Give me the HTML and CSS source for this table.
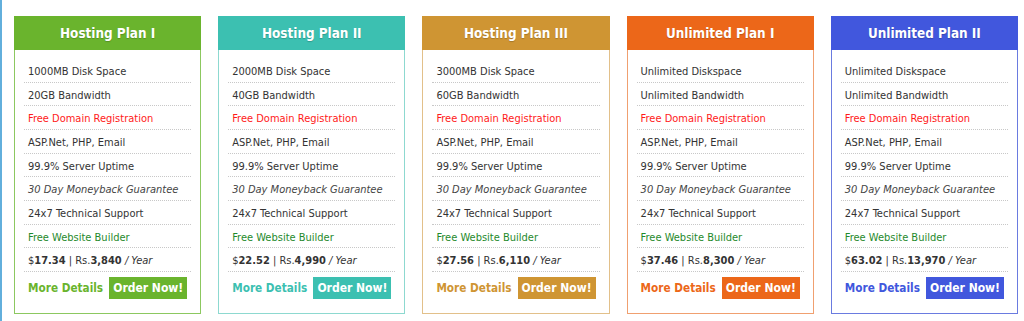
FILE: index.html
```html
<!DOCTYPE html>
<html>
<head>
<meta charset="utf-8">
<link rel="stylesheet" href="styles.css">
</head>
<body>
<div class="page">
  <div class="plan plan-1">
    <h2 class="plan-title">Hosting Plan I</h2>
    <ul class="features">
      <li>1000MB Disk Space</li>
      <li>20GB Bandwidth</li>
      <li class="red">Free Domain Registration</li>
      <li>ASP.Net, PHP, Email</li>
      <li>99.9% Server Uptime</li>
      <li class="em">30 Day Moneyback Guarantee</li>
      <li>24x7 Technical Support</li>
      <li class="green">Free Website Builder</li>
      <li>$<b>17.34</b> | Rs.<b>3,840</b> <i>/ Year</i></li>
    </ul>
    <div class="actions"><a class="more">More Details</a><a class="order">Order Now!</a></div>
  </div>
  <div class="plan plan-2">
    <h2 class="plan-title">Hosting Plan II</h2>
    <ul class="features">
      <li>2000MB Disk Space</li>
      <li>40GB Bandwidth</li>
      <li class="red">Free Domain Registration</li>
      <li>ASP.Net, PHP, Email</li>
      <li>99.9% Server Uptime</li>
      <li class="em">30 Day Moneyback Guarantee</li>
      <li>24x7 Technical Support</li>
      <li class="green">Free Website Builder</li>
      <li>$<b>22.52</b> | Rs.<b>4,990</b> <i>/ Year</i></li>
    </ul>
    <div class="actions"><a class="more">More Details</a><a class="order">Order Now!</a></div>
  </div>
  <div class="plan plan-3">
    <h2 class="plan-title">Hosting Plan III</h2>
    <ul class="features">
      <li>3000MB Disk Space</li>
      <li>60GB Bandwidth</li>
      <li class="red">Free Domain Registration</li>
      <li>ASP.Net, PHP, Email</li>
      <li>99.9% Server Uptime</li>
      <li class="em">30 Day Moneyback Guarantee</li>
      <li>24x7 Technical Support</li>
      <li class="green">Free Website Builder</li>
      <li>$<b>27.56</b> | Rs.<b>6,110</b> <i>/ Year</i></li>
    </ul>
    <div class="actions"><a class="more">More Details</a><a class="order">Order Now!</a></div>
  </div>
  <div class="plan plan-4">
    <h2 class="plan-title">Unlimited Plan I</h2>
    <ul class="features">
      <li>Unlimited Diskspace</li>
      <li>Unlimited Bandwidth</li>
      <li class="red">Free Domain Registration</li>
      <li>ASP.Net, PHP, Email</li>
      <li>99.9% Server Uptime</li>
      <li class="em">30 Day Moneyback Guarantee</li>
      <li>24x7 Technical Support</li>
      <li class="green">Free Website Builder</li>
      <li>$<b>37.46</b> | Rs.<b>8,300</b> <i>/ Year</i></li>
    </ul>
    <div class="actions"><a class="more">More Details</a><a class="order">Order Now!</a></div>
  </div>
  <div class="plan plan-5">
    <h2 class="plan-title">Unlimited Plan II</h2>
    <ul class="features">
      <li>Unlimited Diskspace</li>
      <li>Unlimited Bandwidth</li>
      <li class="red">Free Domain Registration</li>
      <li>ASP.Net, PHP, Email</li>
      <li>99.9% Server Uptime</li>
      <li class="em">30 Day Moneyback Guarantee</li>
      <li>24x7 Technical Support</li>
      <li class="green">Free Website Builder</li>
      <li>$<b>63.02</b> | Rs.<b>13,970</b> <i>/ Year</i></li>
    </ul>
    <div class="actions"><a class="more">More Details</a><a class="order">Order Now!</a></div>
  </div>
</div>
</body>
</html>
```
FILE: styles.css
```css
html, body {
  margin: 0;
  padding: 0;
  background: #fff;
}
body {
  font-family: "DejaVu Sans Condensed", "DejaVu Sans", sans-serif;
  font-size: 11px;
  color: #333;
}
.page {
  box-sizing: border-box;
  height: 321px;
  border-left: 2px solid #62afdc;
  padding: 16px 6px 0 12px;
  display: grid;
  grid-template-columns: repeat(5, 1fr);
  column-gap: 17px;
  align-items: start;
}
.plan {
  --c: #6ab42d;
  --b: #8cc860;
  border: 1px solid var(--b);
  border-top: 0;
  height: 297px;
  display: flex;
  flex-direction: column;
}
.plan-1 { --c: #6ab42d; --b: #8cc860; }
.plan-2 { --c: #3cc0b1; --b: #8dd9d0; }
.plan-3 { --c: #cf9533; --b: #e2c08a; }
.plan-4 { --c: #ec6719; --b: #f0a070; }
.plan-5 { --c: #4157dd; --b: #6a7be0; }
.plan-title {
  margin: 0 -1px;
  height: 34px;
  line-height: 35px;
  background: var(--c);
  color: #fff;
  text-align: center;
  font-size: 13.4px;
  font-weight: bold;
  text-shadow: 0 1px 1px rgba(0, 0, 0, 0.2);
}
.features {
  list-style: none;
  margin: 0 9px;
  padding: 9px 0 0;
}
.features li {
  line-height: 18.65px;
  padding: 4px 4px 0;
  border-bottom: 1px dotted #c8c8c8;
  white-space: nowrap;
}
.features li.red { color: #ff1a1a; }
.features li.green { color: #1f8a2c; }
.features li.em { font-style: italic; color: #444; }
.features b { font-weight: bold; }
.actions {
  display: flex;
  justify-content: space-between;
  align-items: center;
  padding: 5px 13px 0;
}
.more {
  color: var(--c);
  font-weight: bold;
  font-size: 11.7px;
  padding-top: 1px;
}
.order {
  background: var(--c);
  color: #fff;
  font-weight: bold;
  font-size: 12px;
  height: 22px;
  line-height: 23px;
  padding: 0 4px;
}
```
